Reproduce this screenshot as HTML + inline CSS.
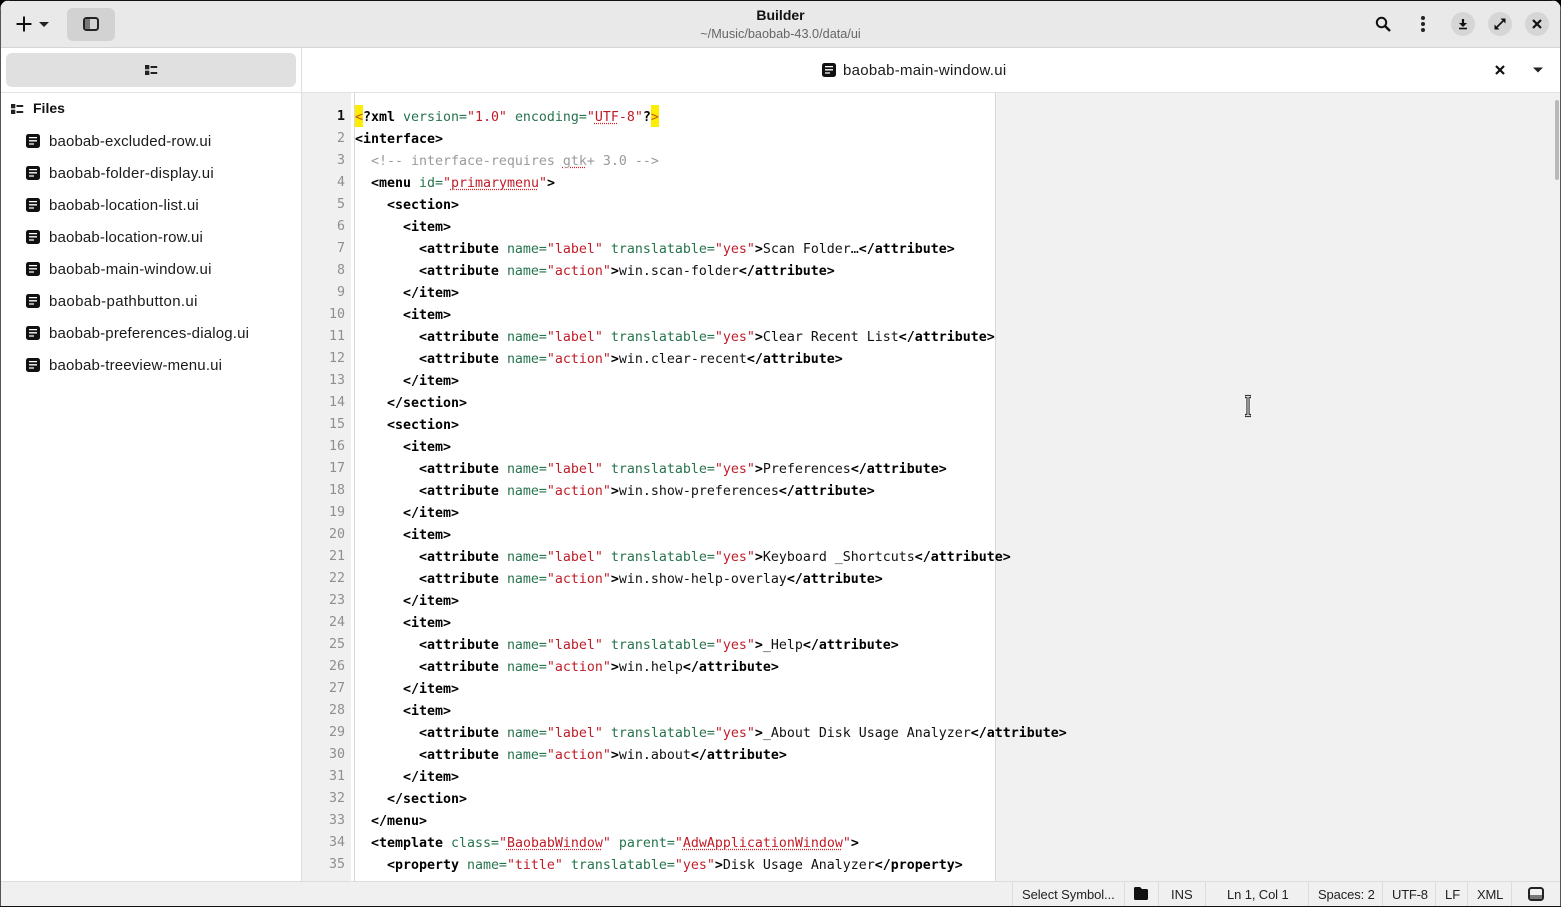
<!DOCTYPE html>
<html><head><meta charset="utf-8"><style>
html,body{margin:0;padding:0;background:#000;}
#w{position:relative;width:1561px;height:907px;overflow:hidden;background:#fff;border-radius:10px 10px 0 0;font-family:"Liberation Sans","Noto Sans CJK JP",sans-serif;color:#111;}
.abs{position:absolute;}
#hb{left:0;top:0;width:1561px;height:47px;background:#e9e9e9;border-bottom:1px solid #d5d5d5;}
#bt{position:absolute;left:0;top:0;width:1561px;height:1px;background:#111;}
#bl{position:absolute;left:0;top:0;width:1px;height:907px;background:#555;}
#br{position:absolute;right:0;top:0;width:1px;height:907px;background:#555;}
#bb{position:absolute;left:0;bottom:0;width:1561px;height:1px;background:#111;}
.t{position:absolute;white-space:pre;}
#side{left:1px;top:48px;width:300px;height:833px;background:#fff;border-right:1px solid #dedede;}
.file{position:absolute;left:49px;font-size:15px;white-space:pre;color:#1a1a1a;line-height:20px;margin-top:1px;}
#gut{left:302px;top:93px;width:49px;height:788px;background:#f0f0f0;}
#gl{left:354px;top:93px;width:1px;height:788px;background:#d8d8d8;}
#rt{left:995px;top:93px;width:566px;height:788px;background:#f1f1f1;border-left:1px solid #d8d8d8;box-sizing:border-box;}
#sb{left:1555px;top:100px;width:4px;height:80px;background:#b9b9b9;border-radius:2px;}
#tabb{left:302px;top:92px;width:1259px;height:1px;background:#e2e2e2;}
#sd2{left:1px;top:92px;width:300px;height:1px;background:#e2e2e2;}
.ln{position:absolute;left:302px;width:43px;margin-top:1px;text-align:right;font:13.29px/22px "DejaVu Sans Mono",monospace;color:#8f8f8f;height:22px;}
.c{position:absolute;left:355px;margin-top:2px;white-space:pre;font:13.29px/22px "DejaVu Sans Mono",monospace;color:#111;height:22px;}
.c b{font-weight:700;color:#000;}
.a{color:#26734d;}
.s{color:#c01c28;}
.g{color:#9a9a9a;}
.u{text-decoration:underline dotted #e01b24;text-underline-offset:2px;}
#st{left:1px;top:881px;width:1559px;height:25px;background:#f0f0f0;border-top:1px solid #dcdcdc;}
.sep{position:absolute;top:882px;width:1px;height:24px;background:#dcdcdc;}
.st{position:absolute;top:886px;font-size:13px;line-height:18px;white-space:pre;color:#222;}
.circ{position:absolute;top:12px;width:24px;height:24px;border-radius:50%;background:#d6d6d6;}
</style></head><body><div id="w">
<div class="abs" id="hb"></div>
<div class="abs" style="left:67px;top:8px;width:48px;height:33px;background:#d2d2d2;border-radius:6px;"></div>
<svg class="abs" style="left:16px;top:16px" width="40" height="16"><path d="M8 0.5v15M0.5 8h15" stroke="#111" stroke-width="2"/><path d="M23 6h10l-5 5z" fill="#222"/></svg>
<svg class="abs" style="left:83px;top:16px" width="16" height="16"><rect x="1" y="2" width="14" height="12" rx="2.5" fill="none" stroke="#222" stroke-width="2"/><rect x="2" y="3" width="5" height="10" fill="#777"/></svg>
<div class="t" style="left:0;width:1561px;text-align:center;top:6px;font-size:14px;font-weight:700;line-height:18px;">Builder</div>
<div class="t" style="left:0;width:1561px;text-align:center;top:26px;font-size:12.7px;line-height:16px;color:#666;">~/Music/baobab-43.0/data/ui</div>
<svg class="abs" style="left:1375px;top:16px" width="16" height="16"><circle cx="6.5" cy="6.5" r="4.7" fill="none" stroke="#111" stroke-width="2"/><path d="M10 10l5 5" stroke="#111" stroke-width="2.4"/></svg>
<svg class="abs" style="left:1415px;top:16px" width="16" height="16"><circle cx="8" cy="2" r="2" fill="#222"/><circle cx="8" cy="8" r="2" fill="#222"/><circle cx="8" cy="14" r="2" fill="#222"/></svg>
<div class="circ" style="left:1451px"></div><div class="circ" style="left:1488px"></div><div class="circ" style="left:1525px"></div>
<svg class="abs" style="left:1457px;top:18px" width="12" height="12"><path d="M6 1v5" stroke="#111" stroke-width="2.2"/><path d="M2 5h8l-4 4z" fill="#111"/><path d="M2 10.5h8" stroke="#111" stroke-width="1.6"/></svg>
<svg class="abs" style="left:1494px;top:18px" width="12" height="12"><path d="M6.5 0.5h5v5zM0.5 6.5v5h5z" fill="#111"/><path d="M3 9l6-6" stroke="#111" stroke-width="1.6"/></svg>
<svg class="abs" style="left:1531px;top:18px" width="12" height="12"><path d="M2 2l8 8M10 2l-8 8" stroke="#111" stroke-width="2.2"/></svg>

<div class="abs" id="side"></div>
<div class="abs" id="sd2"></div>
<div class="abs" style="left:6px;top:53px;width:290px;height:34px;background:#e0e0e0;border-radius:6px;"></div>
<svg class="abs" style="left:145px;top:65px" width="13" height="10"><rect x="0" y="0" width="4.3" height="4.3" fill="#222"/><rect x="0" y="5.7" width="4.3" height="4.3" fill="#222"/><rect x="5.5" y="1" width="6.7" height="2" fill="#222"/><rect x="5.5" y="7" width="6.7" height="2" fill="#222"/></svg>
<svg class="abs" style="left:11px;top:104px" width="13" height="10"><rect x="0" y="0" width="4.3" height="4.3" fill="#222"/><rect x="0" y="5.7" width="4.3" height="4.3" fill="#222"/><rect x="5.5" y="1" width="6.7" height="2" fill="#222"/><rect x="5.5" y="7" width="6.7" height="2" fill="#222"/></svg>
<div class="t" style="left:33px;top:98px;margin-top:0;font-size:14px;font-weight:700;line-height:20px;">Files</div>
<svg class="abs" style="left:26px;top:134px" width="14" height="238"><defs><g id="d"><rect width="14" height="14" rx="2.5" fill="#111"/><path d="M3 3.6h8M3 6.8h8M3 10h5" stroke="#fff" stroke-width="1.3"/></g></defs><use href="#d"/><use href="#d" y="32"/><use href="#d" y="64"/><use href="#d" y="96"/><use href="#d" y="128"/><use href="#d" y="160"/><use href="#d" y="192"/><use href="#d" y="224"/></svg>
<div class="file" style="top:131px;letter-spacing:.14px">baobab-excluded-row.ui</div>
<div class="file" style="top:163px;letter-spacing:.25px">baobab-folder-display.ui</div>
<div class="file" style="top:195px;letter-spacing:.17px">baobab-location-list.ui</div>
<div class="file" style="top:227px;letter-spacing:.14px">baobab-location-row.ui</div>
<div class="file" style="top:259px;letter-spacing:.24px">baobab-main-window.ui</div>
<div class="file" style="top:291px;letter-spacing:.35px">baobab-pathbutton.ui</div>
<div class="file" style="top:323px;letter-spacing:.18px">baobab-preferences-dialog.ui</div>
<div class="file" style="top:355px;letter-spacing:.17px">baobab-treeview-menu.ui</div>

<div class="abs" id="tabb"></div>
<svg class="abs" style="left:822px;top:63px" width="14" height="14"><use href="#d"/></svg>
<div class="t" style="left:843px;top:61px;font-size:15px;line-height:20px;color:#1a1a1a;letter-spacing:.28px">baobab-main-window.ui</div>
<svg class="abs" style="left:1495px;top:65px" width="10" height="10"><path d="M1 1l8 8M9 1l-8 8" stroke="#111" stroke-width="2.2"/></svg>
<svg class="abs" style="left:1533px;top:67px" width="10" height="6"><path d="M0 0.5h10l-5 5z" fill="#222"/></svg>

<div class="abs" id="gut"></div><div class="abs" id="gl"></div><div class="abs" id="rt"></div><div class="abs" id="sb"></div>
<div class="abs" style="left:355px;top:105px;width:8px;height:22px;background:#fdee00;"></div>
<div class="abs" style="left:651px;top:105px;width:8px;height:22px;background:#fdee00;"></div>

<div class="ln" style="top:105px;color:#111;font-weight:700">1</div><div class="ln" style="top:127px">2</div><div class="ln" style="top:149px">3</div><div class="ln" style="top:171px">4</div><div class="ln" style="top:193px">5</div><div class="ln" style="top:215px">6</div><div class="ln" style="top:237px">7</div><div class="ln" style="top:259px">8</div><div class="ln" style="top:281px">9</div><div class="ln" style="top:303px">10</div><div class="ln" style="top:325px">11</div><div class="ln" style="top:347px">12</div><div class="ln" style="top:369px">13</div><div class="ln" style="top:391px">14</div><div class="ln" style="top:413px">15</div><div class="ln" style="top:435px">16</div><div class="ln" style="top:457px">17</div><div class="ln" style="top:479px">18</div><div class="ln" style="top:501px">19</div><div class="ln" style="top:523px">20</div><div class="ln" style="top:545px">21</div><div class="ln" style="top:567px">22</div><div class="ln" style="top:589px">23</div><div class="ln" style="top:611px">24</div><div class="ln" style="top:633px">25</div><div class="ln" style="top:655px">26</div><div class="ln" style="top:677px">27</div><div class="ln" style="top:699px">28</div><div class="ln" style="top:721px">29</div><div class="ln" style="top:743px">30</div><div class="ln" style="top:765px">31</div><div class="ln" style="top:787px">32</div><div class="ln" style="top:809px">33</div><div class="ln" style="top:831px">34</div><div class="ln" style="top:853px">35</div>

<div class="c" style="top:105px"><span style="color:#c4541a">&lt;</span><b>?xml</b> <span class="a">version=</span><span class="s">"1.0"</span> <span class="a">encoding=</span><span class="s">"<span class="u">UTF</span>-8"</span><b>?</b><span style="color:#c4541a">&gt;</span></div>
<div class="c" style="top:127px"><b>&lt;interface&gt;</b></div>
<div class="c g" style="top:149px;color:#9a9a9a">  &lt;!-- interface-requires <span class="u">gtk</span>+ 3.0 --&gt;</div>
<div class="c" style="top:171px">  <b>&lt;menu</b> <span class="a">id=</span><span class="s">"<span class="u">primarymenu</span>"</span><b>&gt;</b></div>
<div class="c" style="top:193px">    <b>&lt;section&gt;</b></div>
<div class="c" style="top:215px">      <b>&lt;item&gt;</b></div>
<div class="c" style="top:237px">        <b>&lt;attribute</b> <span class="a">name=</span><span class="s">"label"</span> <span class="a">translatable=</span><span class="s">"yes"</span><b>&gt;</b>Scan Folder…<b>&lt;/attribute&gt;</b></div>
<div class="c" style="top:259px">        <b>&lt;attribute</b> <span class="a">name=</span><span class="s">"action"</span><b>&gt;</b>win.scan-folder<b>&lt;/attribute&gt;</b></div>
<div class="c" style="top:281px">      <b>&lt;/item&gt;</b></div>
<div class="c" style="top:303px">      <b>&lt;item&gt;</b></div>
<div class="c" style="top:325px">        <b>&lt;attribute</b> <span class="a">name=</span><span class="s">"label"</span> <span class="a">translatable=</span><span class="s">"yes"</span><b>&gt;</b>Clear Recent List<b>&lt;/attribute&gt;</b></div>
<div class="c" style="top:347px">        <b>&lt;attribute</b> <span class="a">name=</span><span class="s">"action"</span><b>&gt;</b>win.clear-recent<b>&lt;/attribute&gt;</b></div>
<div class="c" style="top:369px">      <b>&lt;/item&gt;</b></div>
<div class="c" style="top:391px">    <b>&lt;/section&gt;</b></div>
<div class="c" style="top:413px">    <b>&lt;section&gt;</b></div>
<div class="c" style="top:435px">      <b>&lt;item&gt;</b></div>
<div class="c" style="top:457px">        <b>&lt;attribute</b> <span class="a">name=</span><span class="s">"label"</span> <span class="a">translatable=</span><span class="s">"yes"</span><b>&gt;</b>Preferences<b>&lt;/attribute&gt;</b></div>
<div class="c" style="top:479px">        <b>&lt;attribute</b> <span class="a">name=</span><span class="s">"action"</span><b>&gt;</b>win.show-preferences<b>&lt;/attribute&gt;</b></div>
<div class="c" style="top:501px">      <b>&lt;/item&gt;</b></div>
<div class="c" style="top:523px">      <b>&lt;item&gt;</b></div>
<div class="c" style="top:545px">        <b>&lt;attribute</b> <span class="a">name=</span><span class="s">"label"</span> <span class="a">translatable=</span><span class="s">"yes"</span><b>&gt;</b>Keyboard _Shortcuts<b>&lt;/attribute&gt;</b></div>
<div class="c" style="top:567px">        <b>&lt;attribute</b> <span class="a">name=</span><span class="s">"action"</span><b>&gt;</b>win.show-help-overlay<b>&lt;/attribute&gt;</b></div>
<div class="c" style="top:589px">      <b>&lt;/item&gt;</b></div>
<div class="c" style="top:611px">      <b>&lt;item&gt;</b></div>
<div class="c" style="top:633px">        <b>&lt;attribute</b> <span class="a">name=</span><span class="s">"label"</span> <span class="a">translatable=</span><span class="s">"yes"</span><b>&gt;</b>_Help<b>&lt;/attribute&gt;</b></div>
<div class="c" style="top:655px">        <b>&lt;attribute</b> <span class="a">name=</span><span class="s">"action"</span><b>&gt;</b>win.help<b>&lt;/attribute&gt;</b></div>
<div class="c" style="top:677px">      <b>&lt;/item&gt;</b></div>
<div class="c" style="top:699px">      <b>&lt;item&gt;</b></div>
<div class="c" style="top:721px">        <b>&lt;attribute</b> <span class="a">name=</span><span class="s">"label"</span> <span class="a">translatable=</span><span class="s">"yes"</span><b>&gt;</b>_About Disk Usage Analyzer<b>&lt;/attribute&gt;</b></div>
<div class="c" style="top:743px">        <b>&lt;attribute</b> <span class="a">name=</span><span class="s">"action"</span><b>&gt;</b>win.about<b>&lt;/attribute&gt;</b></div>
<div class="c" style="top:765px">      <b>&lt;/item&gt;</b></div>
<div class="c" style="top:787px">    <b>&lt;/section&gt;</b></div>
<div class="c" style="top:809px">  <b>&lt;/menu&gt;</b></div>
<div class="c" style="top:831px">  <b>&lt;template</b> <span class="a">class=</span><span class="s">"<span class="u">BaobabWindow</span>"</span> <span class="a">parent=</span><span class="s">"<span class="u">AdwApplicationWindow</span>"</span><b>&gt;</b></div>
<div class="c" style="top:853px">    <b>&lt;property</b> <span class="a">name=</span><span class="s">"title"</span> <span class="a">translatable=</span><span class="s">"yes"</span><b>&gt;</b>Disk Usage Analyzer<b>&lt;/property&gt;</b></div>

<svg class="abs" style="left:1242px;top:394px" width="12" height="25"><path d="M3 2.5h6M3 21.5h6M6 3v18" stroke="#fff" stroke-width="5" opacity=".8"/><path d="M3 2.5h6M3 21.5h6M6 3v18" stroke="#222" stroke-width="3.2"/><path d="M3.5 2.5h5M3.5 21.5h5M6 3v18" stroke="#ddd" stroke-width="1.2"/></svg>

<div class="abs" id="st"></div>
<div class="sep" style="left:1012px"></div><div class="sep" style="left:1124px"></div><div class="sep" style="left:1158px"></div><div class="sep" style="left:1205px"></div><div class="sep" style="left:1308px"></div><div class="sep" style="left:1382px"></div><div class="sep" style="left:1435px"></div><div class="sep" style="left:1467px"></div><div class="sep" style="left:1511px"></div>
<div class="st" style="left:1022px;letter-spacing:-.08px">Select Symbol...</div>
<svg class="abs" style="left:1134px;top:887px" width="14" height="13"><path d="M0 1.5q0-1.5 1.5-1.5H6l2 2h4.5q1.5 0 1.5 1.5V11.5q0 1.5-1.5 1.5h-11Q0 13 0 11.5z" fill="#111"/></svg>
<div class="st" style="left:1171px">INS</div>
<div class="st" style="left:1227px;letter-spacing:-.12px">Ln 1, Col 1</div>
<div class="st" style="left:1318px;letter-spacing:-.12px">Spaces: 2</div>
<div class="st" style="left:1392px;letter-spacing:-.2px">UTF-8</div>
<div class="st" style="left:1445px">LF</div>
<div class="st" style="left:1477px;letter-spacing:-.2px">XML</div>
<svg class="abs" style="left:1528px;top:887px" width="16" height="14"><rect x="1" y="1" width="14" height="12" rx="2.5" fill="none" stroke="#222" stroke-width="2"/><rect x="2" y="8" width="12" height="4" fill="#777"/></svg>

<div id="bt"></div><div id="bl"></div><div id="br"></div><div id="bb"></div>
</div></body></html>
